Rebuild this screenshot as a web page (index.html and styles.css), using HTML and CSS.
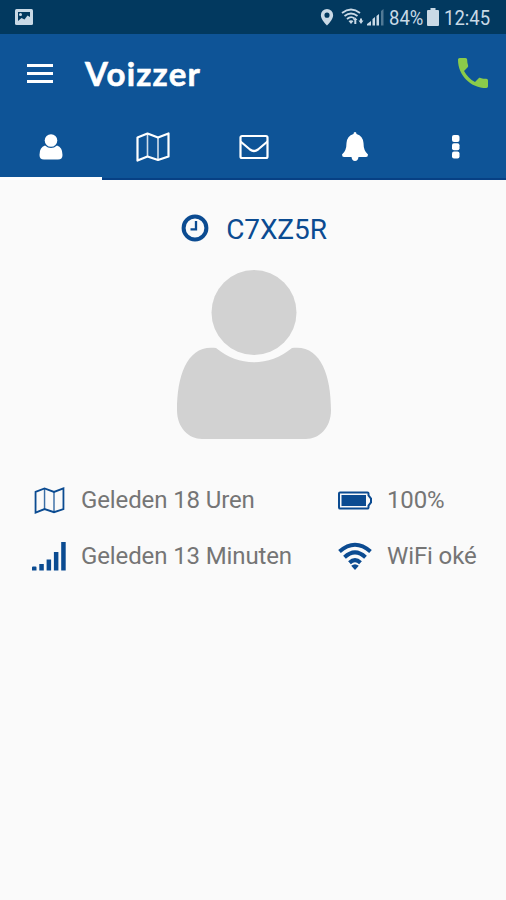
FILE: index.html
```html
<!DOCTYPE html>
<html lang="nl">
<head>
<meta charset="utf-8">
<title>Voizzer</title>
<link rel="stylesheet" href="styles.css">
</head>
<body>
<svg class="defs" aria-hidden="true">
  <symbol id="map" viewBox="0 0 34 30">
    <path d="M1.5 5.5 11.5 1.5 22 5.5 32.5 1.5V24.5L22 28 11.5 24.5 1.5 28.5Z"/>
    <path class="fold" d="M11.5 1.5V24.5M22 5.5V28"/>
  </symbol>
</svg>
<div class="status">
  <svg class="picture" viewBox="0 0 18 16"><rect width="18" height="16" rx="1.5"/><path class="cut" d="M3 3H15V8L12.5 6.5 9.5 10.5 6.5 9 3 12Z"/><circle cx="5.5" cy="5.5" r="1.5"/></svg>
  <svg class="pin" viewBox="0 0 14 18"><path fill-rule="evenodd" d="M7 0A6.5 6.5 0 0 0 .5 6.5C.5 11 7 17.5 7 17.5S13.500 11 13.500 6.500A6.500 6.500 0 0 0 7 0ZM7 3.800A2.700 2.700 0 1 1 7 9.200 2.700 2.700 0 0 1 7 3.800Z"/></svg>
  <svg class="net" viewBox="0 0 23 18"><path class="arc" d="M1 5Q10 -2 19 5M3.500 8Q10 3 16.500 8M6 11Q10 7.500 13.500 10.500"/><path d="M7.500 13Q10 11.500 12.500 13L10 16ZM12 12 14.300 9.500 16.500 12H15.300V16H13.300V12ZM17.500 12.500H19V10.500H21V12.500H22.500L20 16Z"/></svg>
  <svg class="cell" viewBox="0 0 17 18"><path d="M0 17.500V16L4 13V17.500ZM5.500 11 8 9V17.500H5.500ZM9.500 8 12 6V17.500H9.500Z"/><path class="dim" d="M14 3 16.500 1V17.500H14Z"/></svg>
  <span class="pct">84%</span>
  <svg class="batt" viewBox="0 0 12 18"><path d="M3.500 0H8.500V2H11Q12 2 12 3V17Q12 18 11 18H1Q0 18 0 17V3Q0 2 1 2H3.500Z"/></svg>
  <span class="time">12:45</span>
</div>
<header>
  <div class="bar">
    <div class="menu"><i></i><i></i><i></i></div>
    <h1>Voizzer</h1>
    <svg class="phone" viewBox="3 3 18 18"><path d="M6.620 10.790c1.440 2.830 3.760 5.140 6.590 6.590l2.200-2.200c.27-.27.67-.36 1.020-.24 1.120.37 2.330.57 3.570.57.55 0 1 .45 1 1V20c0 .55-.45 1-1 1-9.390 0-17-7.610-17-17 0-.55.45-1 1-1h3.500c.55 0 1 .45 1 1 0 1.250.2 2.450.57 3.570.11.35.03.74-.25 1.020l-2.200 2.200z"/></svg>
  </div>
  <nav>
    <div class="tab active"><svg width="24" height="26" viewBox="0 0 24 26"><circle cx="12" cy="6.500" r="6.300"/><path d="M6 11.500Q12 16.500 18 11.500Q23.500 13 23.500 21Q23.500 25.500 19 25.500H5Q.5 25.500 .5 21Q.5 13 6 11.500Z"/></svg></div>
    <div class="tab"><svg class="line" width="34" height="30"><use href="#map"/></svg></div>
    <div class="tab"><svg class="line" width="30" height="26" viewBox="0 0 30 26"><rect x="1.500" y="2" width="27" height="22" rx="1.500"/><path d="M1.500 7.500 11 15.500Q15 18.500 19 15.500L28.500 7.500"/></svg></div>
    <div class="tab"><svg width="28" height="30" viewBox="0 0 28 30"><path d="M14 0Q15.500 0 15.500 2Q22 4 22.500 11Q22.500 19 27 22.500Q27 25 25 25H17.500Q17 29 14 29T10.500 25H3Q1 25 1 22.500Q5.500 19 5.500 11Q6 4 12.500 2Q12.500 0 14 0Z"/></svg></div>
    <div class="tab"><svg width="8" height="24" viewBox="0 0 8 24"><rect width="7.500" height="7" rx="2"/><rect y="8.300" width="7.500" height="7" rx="2"/><rect y="16.600" width="7.500" height="7" rx="2"/></svg></div>
  </nav>
</header>
<main>
  <div class="code">
    <svg width="28" height="28" viewBox="0 0 28 28"><circle cx="14" cy="14" r="11.400"/><path d="M15 7V15.300H9.500"/></svg>
    <span>C7XZ5R</span>
  </div>
  <svg class="avatar" viewBox="0 0 156 170"><circle cx="78" cy="42.500" r="42.500"/><path d="M40 78C63 97 93 97 116 78C144 74 155 104 155 140C155 158 143 169 130 169H26C13 169 1 158 1 140C1 104 12 74 40 78Z"/></svg>
  <div class="stats">
    <div class="stat"><svg class="mapicon" width="31" height="27"><use href="#map"/></svg><span>Geleden 18 Uren</span></div>
    <div class="stat"><svg width="34" height="19" viewBox="0 0 34 18"><path class="outline" d="M2 1H29.500Q30.500 1 30.500 2V4L33 7V11L30.500 14V16Q30.500 17 29.500 17H2Q1 17 1 16V2Q1 1 2 1Z"/><rect x="3.500" y="3.500" width="24.500" height="11"/></svg><span>100%</span></div>
    <div class="stat"><svg width="34" height="30" viewBox="0 0 34 30"><path d="M0 26.500Q0 25.500 1 25.500H3.500Q4.500 25.500 4.500 26.500V29.500H0ZM7.300 23H11.800V29.500H7.300ZM14.600 18.500H19.100V29.500H14.600ZM21.900 11H26.400V29.500H21.900ZM29.200 1H33.700V29.500H29.200Z"/></svg><span>Geleden 13 Minuten</span></div>
    <div class="stat"><svg width="34" height="28" viewBox="0 0 34 28"><path class="waves" d="M1.500 9.500Q17 -4 32.500 9.500M6.500 15.300Q17 5.500 27.500 15.300M11.500 20.800Q17 15.500 22.500 20.800"/><path d="M13.200 23.800Q17 20.500 20.800 23.800L17 28Z"/></svg><span>WiFi oké</span></div>
  </div>
</main>
</body>
</html>
```
FILE: styles.css
```css
* { box-sizing: border-box; }
body { margin: 0; height: 900px; overflow: hidden; background: #fafafa; font-family: Roboto, sans-serif; }
svg { display: block; flex: none; }
.defs { display: none; }

.status { height: 34px; padding: 0 15px; display: flex; align-items: center; background: #02395f; color: #c9d9e6; fill: #c9d9e6; white-space: nowrap; }
.picture { width: 18px; height: 16px; margin-right: auto; }
.cut { fill: #02395f; }
.pin { width: 14px; height: 17px; margin-right: 7px; }
.net { width: 23px; height: 18px; margin-right: 3px; }
.arc { fill: none; stroke: #c9d9e6; stroke-width: 1.8; }
.cell { width: 17px; height: 18px; margin-right: 5px; }
.dim { opacity: .4; }
.pct, .time { font-size: 21px; line-height: 34px; padding-top: 2px; transform: scaleX(.88); transform-origin: left; }
.pct { width: 38px; }
.batt { width: 12px; height: 18px; margin-right: 5px; }
.time { width: 47px; }

header { height: 146px; background: #0e5497; color: #fff; fill: #fff; display: flex; flex-direction: column; }
.bar { height: 78px; padding: 0 18px 0 27px; display: flex; align-items: center; }
.menu { width: 26px; display: grid; gap: 5px; }
.menu i { height: 3px; background: #fff; }
h1 { margin: 0 auto 0 32px; font: 700 33px/40px Lato, sans-serif; letter-spacing: 1.2px; -webkit-text-stroke: .6px #fff; }
.phone { width: 30px; height: 30px; fill: #8bcb4a; }
nav { flex: 1; display: grid; grid-template-columns: repeat(5, 1fr); }
.tab { display: flex; justify-content: center; align-items: center; padding-top: 4px; border-bottom: 2px solid #074084; }
.tab.active { padding-top: 5px; border-bottom: 3px solid #fff; width: 102px; }
.line { fill: none; stroke: #fff; stroke-width: 2.200; stroke-linejoin: round; }
.fold { stroke-width: 1.6; opacity: .8; }

main { padding-top: 33px; color: #0b4b91; fill: #0b4b91; }
.code { height: 30px; padding-left: 2px; display: flex; justify-content: center; align-items: center; gap: 17px; font-size: 28px; }
.code svg { margin-top: -1px; fill: none; stroke: #0b4b91; stroke-width: 4; }
.code path { stroke-width: 2.3; }
.code span { line-height: 34px; padding-top: 4px; letter-spacing: -.1px; }
.avatar { width: 156px; height: 170px; margin: 27px 174px 32px 176px; fill: #d2d2d2; }
.stats { padding-left: 32px; display: grid; grid-template-columns: 306px 1fr; grid-auto-rows: 56px; }
.stat { display: grid; grid-template-columns: 34px 1fr; column-gap: 15px; align-items: center; justify-items: center; }
.stat span { justify-self: start; font-size: 24px; line-height: 32px; letter-spacing: -.12px; color: #757575; white-space: nowrap; }
.mapicon, .outline { fill: none; stroke: #0b4b91; stroke-width: 2; }
.waves { fill: none; stroke: #0b4b91; stroke-width: 4; }
```
